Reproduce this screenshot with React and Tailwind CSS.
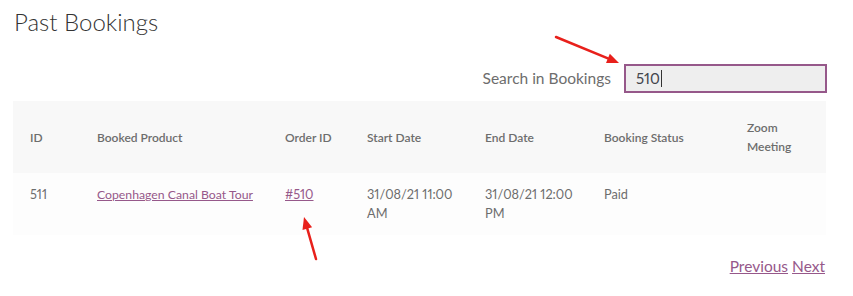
import React from 'react';

const cols = [
  { label: 'ID', w: 'w-[67px]' },
  { label: 'Booked Product', w: 'w-[188px]' },
  { label: 'Order ID', w: 'w-[82px]' },
  { label: 'Start Date', w: 'w-[118px]' },
  { label: 'End Date', w: 'w-[119px]' },
  { label: 'Booking Status', w: 'w-[143px]' },
  { label: 'Zoom Meeting', w: 'w-[96px]' },
];

const Arrow = ({ x1, y1, x2, y2 }) => {
  const a = Math.atan2(y2 - y1, x2 - x1);
  const L = 12;
  const s = 5;
  const bx = x2 - L * Math.cos(a);
  const by = y2 - L * Math.sin(a);
  const px = -Math.sin(a) * s;
  const py = Math.cos(a) * s;
  return (
    <g>
      <line x1={x1} y1={y1} x2={bx} y2={by} stroke="#e8201b" strokeWidth="2.5" strokeLinecap="round" />
      <polygon points={`${x2},${y2} ${bx + px},${by + py} ${bx - px},${by - py}`} fill="#e8201b" />
    </g>
  );
};

export default function App() {
  return (
    <div
      className="relative w-[853px] h-[296px] bg-white text-[#6d6d6d] overflow-hidden proportional-nums"
      style={{ fontFamily: 'Lato, "Open Sans", sans-serif' }}
    >
      <div className="ml-[13px] w-[814px] pt-[6px]">
        <h1 className="text-[24px] leading-[32px] font-light text-[#333333] pl-px">Past Bookings</h1>

        {/* Search */}
        <div className="flex items-center justify-end gap-[13px] mt-[26px]">
          <label className="text-[15.5px] text-[#6d6d6d]">Search in Bookings</label>
          <div className="w-[203px] h-[29px] border-2 border-[#96588a] bg-[#eeeeee] flex items-center px-[10px]">
            <span className="text-[15px] text-[#43454b]">510</span>
            <span className="w-px h-[17px] bg-[#333] ml-px" />
          </div>
        </div>

        {/* Table */}
        <table className="mt-[8px] w-[813px] table-fixed border-collapse text-[12.75px]">
          <colgroup>
            {cols.map((c) => (
              <col key={c.label} className={c.w} />
            ))}
          </colgroup>
          <thead>
            <tr className="bg-[#f8f8f8] h-[72px]">
              {cols.map((c) => (
                <th key={c.label} className="text-left text-[12px] font-semibold pl-[17px] pr-[12px] leading-[19px] align-middle">
                  {c.label}
                </th>
              ))}
            </tr>
          </thead>
          <tbody>
            <tr className="bg-[#fdfdfd] h-[62px] leading-[19px]">
              <td className="pl-[17px] pt-[12px] align-top">511</td>
              <td className="pl-[17px] pt-[12px] align-top whitespace-nowrap">
                <a className="text-[#96588a] underline text-[12.25px]">Copenhagen Canal Boat Tour</a>
              </td>
              <td className="pl-[17px] pt-[12px] align-top">
                <a className="text-[#96588a] underline">#510</a>
              </td>
              <td className="pl-[17px] pr-[8px] pt-[12px] align-top">
                <span className="whitespace-nowrap">31/08/21 11:00</span> AM
              </td>
              <td className="pl-[17px] pr-[8px] pt-[12px] align-top">
                <span className="whitespace-nowrap">31/08/21 12:00</span> PM
              </td>
              <td className="pl-[17px] pt-[12px] align-top">Paid</td>
              <td className="pl-[17px] pt-[12px] align-top"></td>
            </tr>
          </tbody>
        </table>

        {/* Pagination */}
        <div className="flex justify-end gap-[4px] mt-[20px] pr-[2px] text-[15.5px]">
          <a className="text-[#96588a] underline">Previous</a>
          <a className="text-[#96588a] underline">Next</a>
        </div>
      </div>

      {/* Annotation arrows */}
      <svg className="absolute inset-0 pointer-events-none" width="853" height="296">
        <Arrow x1={556} y1={37} x2={619} y2={63} />
        <Arrow x1={316} y1={259} x2={304} y2={217} />
      </svg>
    </div>
  );
}
